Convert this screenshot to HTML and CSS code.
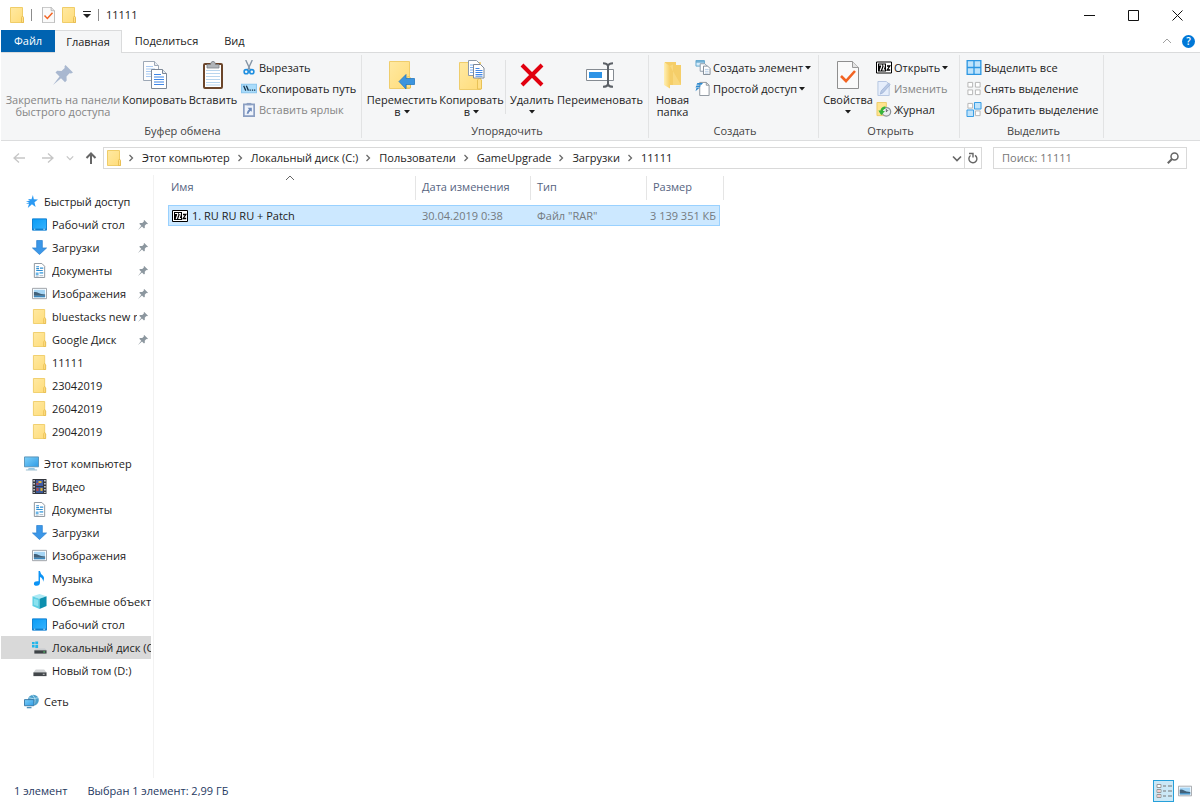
FILE: index.html
```html
<!DOCTYPE html>
<html lang="ru">
<head>
<meta charset="utf-8">
<title>11111</title>
<link rel="stylesheet" href="styles.css">
</head>
<body>
<svg class="sprite" aria-hidden="true">
  <defs>
    <linearGradient id="g-folder" x1="0" y1="0" x2="1" y2="1"><stop offset="0" stop-color="#ffe9a2"/><stop offset="1" stop-color="#ffdc79"/></linearGradient>
    <linearGradient id="g-screen" x1="0" y1="0" x2="1" y2="1"><stop offset="0" stop-color="#7fd0f8"/><stop offset="1" stop-color="#2d9be6"/></linearGradient>
    <linearGradient id="g-desk" x1="0" y1="0" x2="1" y2="1"><stop offset="0" stop-color="#0a9cf5"/><stop offset="1" stop-color="#36b4ff"/></linearGradient>
    <linearGradient id="g-open" x1="0" y1="0" x2="1" y2="0"><stop offset="0" stop-color="#fff0b5"/><stop offset="1" stop-color="#f7cf66"/></linearGradient>
  </defs>
  <symbol id="folder" viewBox="0 0 14 16"><path d="M.5.5h12v9.5l1 1v4.500H.5z" fill="url(#g-folder)" stroke="#f0cd68"/><path d="M11.500 15.500V10.500l1-1.500 1 1.500v5z" fill="#ffe08a" stroke="#e5b94a" stroke-width=".8"/></symbol>
  <symbol id="props" viewBox="0 0 22 28"><path d="M.5.5h15l6 6v21H.5z" fill="#fafafa" stroke="#8f8f8f"/><path d="M15.500.5v6h6" fill="#e4e4e4" stroke="#9a9a9a"/><path d="M4 15l5 5L18 10" fill="none" stroke="#f26322" stroke-width="2.600"/></symbol>
  <symbol id="pin" viewBox="0 0 20 20"><path d="M12.500 0L20 7.500l-2 1-1.500-.3-3 3.300.2 4-1.700 1.700-4-4L0 20l6.500-8.500-4-4L4.200 5.800l4.300.2 3.200-3L11.500 1.200z"/></symbol>
  <symbol id="copy" viewBox="0 0 24 28"><g opacity=".85"><path d="M.5.5h11l4 4v15H.5z" fill="#fff" stroke="#8e9bab"/><path d="M11.500.5v4h4" fill="#e5eaf0" stroke="#8e9bab"/><path d="M3 5.500h7M3 8h9M3 10.500h9M3 13h9M3 15.500h9" stroke="#9cc3f3"/></g><path d="M8.500 8.500h11l4 4v15h-15z" fill="#fff" stroke="#7d8897"/><path d="M19.500 8.500v4h4" fill="#e5eaf0" stroke="#7d8897"/><path d="M11 13.500h7M11 16h10M11 18.500h10M11 21h10M11 23.500h10" stroke="#3f86e6" stroke-width="1.200"/></symbol>
  <symbol id="paste" viewBox="0 0 20 28"><rect x="1" y="3" width="18" height="24" rx="1" fill="#fff" stroke="#6b452a" stroke-width="2"/><path d="M3 9.500h14M3 12.500h14M3 15.500h14M3 18.500h14M3 21.500h14M3 24h14" stroke="#b9d6ee"/><path d="M4 3.500h3.500L8 1.500q2-2.500 4 0l.5 2H16V7H4z" fill="#b0b4b8" stroke="#7c8085" stroke-width=".8"/></symbol>
  <symbol id="cut" viewBox="0 0 12 16"><path d="M2.500 0l5 11M9.500 0l-5 11" stroke="#8595a6" stroke-width="1.500"/><circle cx="3" cy="12.500" r="2.200" fill="none" stroke="#1f8fe0" stroke-width="1.700"/><circle cx="9" cy="12.500" r="2.200" fill="none" stroke="#1f8fe0" stroke-width="1.700"/></symbol>
  <symbol id="path" viewBox="0 0 15 9"><path d="M.5.5h14v8H.5z" fill="#a9dcfb" stroke="#8ac6ee"/><path d="M2.500 2l2 4.500M5 2l2 4.500" stroke="#16324a" stroke-width="1.200"/><path d="M8 6h1.200M10.200 6h1.200M12.200 6h1.200" stroke="#16324a"/></symbol>
  <symbol id="shortcut" viewBox="0 0 13 16"><path d="M1 2.500h11v12.500H1z" fill="#eef3fb" stroke="#8b9fc2" stroke-width="1.800"/><path d="M4 1h5v2.500H4z" fill="#8b9fc2"/><path d="M5 6h4.500v4.500L8.200 9.200Q6 10.500 6 12.500H4Q4 9.500 6.600 7.600z" fill="#6f8bbb"/></symbol>
  <symbol id="move" viewBox="0 0 26 28"><path d="M.5.500h20v27H.5z" fill="url(#g-folder)" stroke="#efcd6c"/><path d="M17.500 27V17l2-2 2 2v10z" fill="#ffe08a" stroke="#e8c257"/><path d="M10 20.500l7-7V17.500h8.500v6H17V28z" fill="#3c94de" stroke="#2478c0" stroke-width=".8"/></symbol>
  <symbol id="copyto" viewBox="0 0 26 30"><path d="M.5 2.500h21v27H.5z" fill="url(#g-folder)" stroke="#efcd6c"/><path d="M18.500 29V20l2-2 2 2v9z" fill="#ffe08a" stroke="#e8c257"/><path d="M9.500.500h8l3 3v12h-11z" fill="#fff" stroke="#8e9bab"/><path d="M11 5h6M11 7.500h4M11 10h4M11 12.500h4" stroke="#7cb0f0"/><path d="M14.500 4.500h7l3.500 3.500v10h-10.500z" fill="#fff" stroke="#7d8897"/><path d="M16.500 8.500h4M16.500 10.500h7M16.500 12.500h7M16.500 14.500h7M16.500 16.200h7" stroke="#3f86e6"/></symbol>
  <symbol id="delete" viewBox="0 0 24 24"><path d="M2 2l20 20M22 2L2 22" stroke="#e1000f" stroke-width="4" fill="none"/></symbol>
  <symbol id="rename" viewBox="0 0 28 26"><path d="M.500 7.500h27v11H.500z" fill="#fff" stroke="#858b92"/><path d="M3 10h13v6H3z" fill="#2d93e6"/><path d="M17 1.200q4 0 5 2.300 1-2.300 5-2.300M22 3v20M17 24.800q4 0 5-2.300 1 2.300 5 2.300" fill="none" stroke="#5c6167" stroke-width="2"/></symbol>
  <symbol id="newfolder" viewBox="0 0 18 28"><path d="M1 1h11v3h5v20H1z" fill="#f5ce69"/><path d="M0 1l6 4v22.500L0 24z" fill="url(#g-open)"/><path d="M6 5l3-1.500V24h8" fill="#f9d87e"/></symbol>
  <symbol id="newitem" viewBox="0 0 16 16"><path d="M.5.5h9v6h-9z" fill="#d6edfb" stroke="#5fa5cd"/><path d="M.5 2h9" stroke="#5fa5cd" stroke-width="1.500"/><path d="M5 4h5l2 2v6H5z" fill="#fff" stroke="#8a99a8"/><path d="M8.500 6.500H13l2.500 2.500v6.500h-7z" fill="#fff" stroke="#7c8793"/><path d="M10 10h4M10 12h4M10 14h4" stroke="#9ebcdc" stroke-width=".8"/></symbol>
  <symbol id="easy" viewBox="0 0 16 16"><path d="M4.500 1.500h7l3 3v11h-10z" fill="#fff" stroke="#8a929b"/><path d="M11.500 1.500v3h3" fill="none" stroke="#8a929b"/><path d="M2 2h6L6.500 4H1zM1 4.800h5L4 7H0zM1 7.500h3L0 11z" fill="#2f8bd0"/></symbol>
  <symbol id="sevenzip" viewBox="0 0 16 12"><path d="M.5.500h15v11H.5z" fill="#fff" stroke="#000"/><path d="M2 2h8v8H2z" fill="#000"/><path d="M3 3.500h2.700v1.500L4.200 9M7 3.500h2M8.200 3.500v1.500L7 8.500h2" fill="none" stroke="#fff" stroke-width="1.200"/><path d="M11 4.500h2.800L11.200 8.500h3" fill="none" stroke="#000" stroke-width="1.300"/></symbol>
  <symbol id="edit" viewBox="0 0 14 16"><path d="M.5.500h9l3 3v12H.5z" fill="#e6eefb" stroke="#b3c4e0"/><path d="M3 14l1-3.500L12 2l1.500 2L6 12.500z" fill="#b9c9e4" stroke="#9db2d6" stroke-width=".8"/></symbol>
  <symbol id="history" viewBox="0 0 16 16"><path d="M.5.500h10v14H.5z" fill="#ffe48f" stroke="#eccb68"/><circle cx="10.500" cy="10.500" r="4.600" fill="#e9ecee" stroke="#8c9296" stroke-width="1.300"/><path d="M10.500 7.500v3l2-2" fill="none" stroke="#5d6469" stroke-width="1"/><path d="M2 9h2.200Q5 5 9.500 4.500v2.300Q7 7.500 6.700 9.500H9L5 14z" fill="#35b53a"/></symbol>
  <symbol id="selall" viewBox="0 0 16 16"><path d="M.7.700h14.600v14.600H.7zM8 .7v14.600M.7 8h14.600" fill="#bfe3fb" stroke="#2c96e2" stroke-width="1.400"/></symbol>
  <symbol id="selnone" viewBox="0 0 16 16"><path d="M1.500 1.500h5v5h-5zM9.500 1.500h5v5h-5zM1.500 9.500h5v5h-5zM9.500 9.500h5v5h-5z" fill="#fff" stroke="#b3b3b3"/></symbol>
  <symbol id="selinv" viewBox="0 0 16 16"><path d="M1.500 1.500h5v5h-5zM9.500 9.500h5v5h-5z" fill="#fff" stroke="#b3b3b3"/><path d="M8.500.500h7v7h-7zM.5 8.500h7v7h-7z" fill="#bfe3fb" stroke="#2c96e2"/></symbol>
  <symbol id="star" viewBox="0 0 14 14"><path d="M8.500 0l1 4.500 4.500.3-3.800 3 1.200 5.200L7.500 10 3 14l1.300-4.500H1L4.600 7.800 1 7l4.300-1L3 4.400l4 .1z" fill="#2b9af3"/></symbol>
  <symbol id="desktop" viewBox="0 0 16 13"><path d="M.5.500h15v12H.5z" fill="url(#g-desk)" stroke="#0b7ccf"/><path d="M1 11.500h14" stroke="#0670bd"/><path d="M2 11.500h1.500M12 11.500h2" stroke="#bfe3ff"/></symbol>
  <symbol id="down" viewBox="0 0 16 16"><path d="M5 .5h6v8h4.500L8 15.500.5 8.500H5z" fill="#3b97e8" stroke="#2c82d0" stroke-width=".8"/></symbol>
  <symbol id="docs" viewBox="0 0 12 16"><path d="M.5.500h8l3 3v12H.5z" fill="#fff" stroke="#8a929b"/><path d="M2.500 4h3M2.500 6h3M6.500 5.500h3.500M2.500 8h7" stroke="#2f8fd3" stroke-width="1.200"/><path d="M2 10h3v3H2zM6 9.500h4v2H6z" fill="#69b4e6"/><path d="M6 13.500h4M2 14h3" stroke="#8ba4b8" stroke-width=".8"/></symbol>
  <symbol id="image" viewBox="0 0 16 12"><path d="M.5.500h15v11H.5z" fill="#fff" stroke="#9a9fa5"/><path d="M2 2h12v8H2z" fill="#a5d5f5"/><path d="M2 4.500q3-.5 5 1t7 1.500v1.500H2z" fill="#41617a"/><path d="M2 8.500h12V10H2z" fill="#3b87bd"/></symbol>
  <symbol id="pc" viewBox="0 0 16 15"><path d="M.5.500h15v10.500H.5z" fill="url(#g-screen)" stroke="#5892b7"/><path d="M5 12.500h6l1 1.500H4z" fill="#6eb3dd"/><path d="M2 14.400h12" stroke="#91b7cc"/></symbol>
  <symbol id="video" viewBox="0 0 14 15"><path d="M0 0h14v15H0z" fill="#34373e"/><path d="M1.600 1v13M12.400 1v13" stroke="#d7dbe0" stroke-width="1.500" stroke-dasharray="1.500 1.500"/><path d="M3.500 1h7v6h-7z" fill="#405da8"/><path d="M3.500 8h7v6h-7z" fill="#3d5a99"/><path d="M6 2h3v2H6zM8 9h2v3H8z" fill="#e0b135"/><path d="M4 4h2v2H4zM4 9h2v3H4z" fill="#ba4b42"/></symbol>
  <symbol id="music" viewBox="0 0 12 16"><path d="M5 0h1.500Q7 3 9.500 4.800 12 7 9.800 11.500 10 8 6.500 6.500V12.500Q6.300 15.500 3 15.800 0 15.800 0 13.600 .3 11 3.500 11H5z" fill="#0b93f5"/></symbol>
  <symbol id="cube" viewBox="0 0 16 16"><path d="M8 0l7.500 2.500L8 5 .5 2.500z" fill="#aeeaf5"/><path d="M.5 2.500L8 5v11L.5 12.800z" fill="#5fd0e4"/><path d="M15.500 2.500L8 5v11l7.500-3.200z" fill="#0d8fae"/><path d="M2 5l4.500 1.500v6.500L2 11.500z" fill="#8be2ef"/></symbol>
  <symbol id="drive-c" viewBox="0 0 16 14"><path d="M0 1h2.800v2.600H0zM3.500.5h3v3.100h-3zM0 4.300h2.800v2.600H0zM3.500 4.300h3v3.100h-3z" fill="#21b5ea"/><path d="M4 8h10l1.500 2H2.500z" fill="#c9cccf"/><path d="M2.500 10h13v3.500h-13z" fill="#3e4347"/><path d="M12 11.800h2" stroke="#59e06f"/></symbol>
  <symbol id="drive" viewBox="0 0 16 14"><path d="M4 6h9l2.500 3h-14z" fill="#d2d4d6"/><path d="M1.500 9h14v4h-14z" fill="#43474b"/><path d="M11.500 11h2" stroke="#dadada"/></symbol>
  <symbol id="network" viewBox="0 0 16 15"><circle cx="10" cy="6" r="5.800" fill="#4c9fca"/><path d="M5 3.500q5 2 10 0M9 .5q5 5 1 11" fill="none" stroke="#b1def2"/><path d="M.5 5.500h10v6.500H.5z" fill="url(#g-screen)" stroke="#3779a6"/><path d="M3 14h5" stroke="#4e90b8" stroke-width="1.500"/></symbol>
  <symbol id="chev-r" viewBox="0 0 6 8"><path d="M1.500 1l3 3-3 3" fill="none" stroke="#6a6a6a" stroke-width="1.300"/></symbol>
  <symbol id="chev-d" viewBox="0 0 10 7"><path d="M1 1.500l4 4 4-4" fill="none" stroke="currentColor" stroke-width="1.600"/></symbol>
  <symbol id="chev-u" viewBox="0 0 10 6"><path d="M1 5l4-4 4 4" fill="none" stroke="currentColor"/></symbol>
  <symbol id="arrow" viewBox="0 0 12 10"><path d="M6 .5L1 5l5 4.500M1 5h11" fill="none" stroke="currentColor" stroke-width="1.300"/></symbol>
  <symbol id="caret" viewBox="0 0 6 4"><path d="M0 0h6L3 3.500z" fill="currentColor"/></symbol>
</svg>

<div class="window">
  <header class="titlebar">
    <svg class="ico folder"><use href="#folder"/></svg>
    <span class="tick"></span>
    <button class="quick props" aria-label="Свойства"><svg><use href="#props"/></svg></button>
    <button class="quick" aria-label="Новая папка"><svg class="folder"><use href="#folder"/></svg></button>
    <button class="quick more" aria-label="Настройка панели"><svg viewBox="0 0 8 8"><path d="M0 .5h8" stroke="#222"/><path d="M0 3h8L4 7z" fill="#222"/></svg></button>
    <span class="tick"></span>
    <h1>11111</h1>
    <div class="controls">
      <button aria-label="Свернуть"><svg viewBox="0 0 11 11"><path d="M0 5.500h11"/></svg></button>
      <button aria-label="Развернуть"><svg viewBox="0 0 11 11"><path d="M.5.500h10v10H.5z"/></svg></button>
      <button aria-label="Закрыть"><svg viewBox="0 0 11 11"><path d="M.5.500l10 10M10.500.500l-10 10"/></svg></button>
    </div>
  </header>

  <nav class="tabs">
    <button class="tab file">Файл</button>
    <button class="tab active">Главная</button>
    <button class="tab">Поделиться</button>
    <button class="tab">Вид</button>
    <div class="tabs-end">
      <button class="collapse" aria-label="Свернуть ленту"><svg><use href="#chev-u"/></svg></button>
      <button class="help" aria-label="Справка">?</button>
    </div>
  </nav>

  <section class="ribbon">
    <div class="group g-clip">
      <div class="tools">
        <button class="big w-pin" disabled><span class="pic"><svg class="pin-big"><use href="#pin"/></svg></span>Закрепить на панели быстрого доступа</button>
        <button class="big w-copy"><span class="pic"><svg class="s24"><use href="#copy"/></svg></span>Копировать</button>
        <button class="big w-mid"><span class="pic"><svg class="s20"><use href="#paste"/></svg></span>Вставить</button>
        <div class="stack">
          <button class="small"><svg><use href="#cut"/></svg>Вырезать</button>
          <button class="small"><svg><use href="#path"/></svg>Скопировать путь</button>
          <button class="small" disabled><svg><use href="#shortcut"/></svg>Вставить ярлык</button>
        </div>
      </div>
      <div class="caption">Буфер обмена</div>
    </div>
    <div class="group g-org">
      <div class="tools">
        <button class="big w-move"><span class="pic"><svg class="s26"><use href="#move"/></svg></span>Переместить<span>в<svg class="caret"><use href="#caret"/></svg></span></button>
        <button class="big w-copyto"><span class="pic"><svg class="s26"><use href="#copyto"/></svg></span>Копировать<span>в<svg class="caret"><use href="#caret"/></svg></span></button>
        <span class="split"></span>
        <button class="big w-mid"><span class="pic"><svg class="s24"><use href="#delete"/></svg></span>Удалить<span><svg class="caret alone"><use href="#caret"/></svg></span></button>
        <button class="big w-ren"><span class="pic"><svg class="s28"><use href="#rename"/></svg></span>Переименовать</button>
      </div>
      <div class="caption">Упорядочить</div>
    </div>
    <div class="group g-new">
      <div class="tools">
        <button class="big w-new"><span class="pic"><svg class="s20"><use href="#newfolder"/></svg></span>Новая папка</button>
        <div class="stack">
          <button class="small"><svg><use href="#newitem"/></svg>Создать элемент<svg class="caret"><use href="#caret"/></svg></button>
          <button class="small"><svg><use href="#easy"/></svg>Простой доступ<svg class="caret"><use href="#caret"/></svg></button>
        </div>
      </div>
      <div class="caption">Создать</div>
    </div>
    <div class="group g-open">
      <div class="tools">
        <button class="big w-mid"><span class="pic"><svg class="s24"><use href="#props"/></svg></span>Свойства<span><svg class="caret alone"><use href="#caret"/></svg></span></button>
        <div class="stack">
          <button class="small"><svg><use href="#sevenzip"/></svg>Открыть<svg class="caret"><use href="#caret"/></svg></button>
          <button class="small" disabled><svg><use href="#edit"/></svg>Изменить</button>
          <button class="small"><svg><use href="#history"/></svg>Журнал</button>
        </div>
      </div>
      <div class="caption">Открыть</div>
    </div>
    <div class="group g-sel">
      <div class="tools">
        <div class="stack">
          <button class="small"><svg><use href="#selall"/></svg>Выделить все</button>
          <button class="small"><svg><use href="#selnone"/></svg>Снять выделение</button>
          <button class="small"><svg><use href="#selinv"/></svg>Обратить выделение</button>
        </div>
      </div>
      <div class="caption">Выделить</div>
    </div>
  </section>

  <div class="location">
    <div class="history">
      <button class="off" aria-label="Назад"><svg><use href="#arrow"/></svg></button>
      <button class="off" aria-label="Вперёд"><svg class="flip"><use href="#arrow"/></svg></button>
      <button class="off recent" aria-label="Последние"><svg><use href="#chev-d"/></svg></button>
      <button class="up" aria-label="Вверх"><svg viewBox="0 0 12 12"><path d="M1.500 6L6 1.500 10.500 6M6 2v10" fill="none" stroke="#666" stroke-width="2"/></svg></button>
    </div>
    <div class="address">
      <svg class="folder"><use href="#folder"/></svg>
      <svg class="sep"><use href="#chev-r"/></svg><a href="#">Этот компьютер</a>
      <svg class="sep"><use href="#chev-r"/></svg><a href="#">Локальный диск (C:)</a>
      <svg class="sep"><use href="#chev-r"/></svg><a href="#">Пользователи</a>
      <svg class="sep"><use href="#chev-r"/></svg><a href="#">GameUpgrade</a>
      <svg class="sep"><use href="#chev-r"/></svg><a href="#">Загрузки</a>
      <svg class="sep"><use href="#chev-r"/></svg><a href="#">11111</a>
      <button class="drop" aria-label="Предыдущие расположения"><svg><use href="#chev-d"/></svg></button>
      <button class="refresh" aria-label="Обновить"><svg viewBox="0 0 10 12"><path d="M7 3.300A4 4 0 1 1 2.500 3.500M1 1.500h4v4" fill="none" stroke="#666" stroke-width="1.400"/></svg></button>
    </div>
    <label class="search">
      <input type="text" placeholder="Поиск: 11111" aria-label="Поиск">
      <svg viewBox="0 0 12 12"><circle cx="7.500" cy="4.500" r="3.500" fill="none" stroke="#666" stroke-width="1.500"/><path d="M5 7L.8 11.200" stroke="#666" stroke-width="2"/></svg>
    </label>
  </div>

  <main class="body">
    <nav class="tree">
      <ul>
        <li><a href="#" class="root quickroot"><svg><use href="#star"/></svg><span>Быстрый доступ</span></a></li>
        <li><a href="#"><svg><use href="#desktop"/></svg><span>Рабочий стол</span><svg class="pinned"><use href="#pin"/></svg></a></li>
        <li><a href="#"><svg><use href="#down"/></svg><span>Загрузки</span><svg class="pinned"><use href="#pin"/></svg></a></li>
        <li><a href="#"><svg><use href="#docs"/></svg><span>Документы</span><svg class="pinned"><use href="#pin"/></svg></a></li>
        <li><a href="#"><svg><use href="#image"/></svg><span>Изображения</span><svg class="pinned"><use href="#pin"/></svg></a></li>
        <li><a href="#"><svg><use href="#folder"/></svg><span>bluestacks new r</span><svg class="pinned"><use href="#pin"/></svg></a></li>
        <li><a href="#"><svg><use href="#folder"/></svg><span>Google Диск</span><svg class="pinned"><use href="#pin"/></svg></a></li>
        <li><a href="#"><svg><use href="#folder"/></svg><span>11111</span></a></li>
        <li><a href="#"><svg><use href="#folder"/></svg><span>23042019</span></a></li>
        <li><a href="#"><svg><use href="#folder"/></svg><span>26042019</span></a></li>
        <li><a href="#"><svg><use href="#folder"/></svg><span>29042019</span></a></li>
      </ul>
      <ul>
        <li><a href="#" class="root"><svg><use href="#pc"/></svg><span>Этот компьютер</span></a></li>
        <li><a href="#"><svg><use href="#video"/></svg><span>Видео</span></a></li>
        <li><a href="#"><svg><use href="#docs"/></svg><span>Документы</span></a></li>
        <li><a href="#"><svg><use href="#down"/></svg><span>Загрузки</span></a></li>
        <li><a href="#"><svg><use href="#image"/></svg><span>Изображения</span></a></li>
        <li><a href="#"><svg><use href="#music"/></svg><span>Музыка</span></a></li>
        <li><a href="#"><svg><use href="#cube"/></svg><span>Объемные объекты</span></a></li>
        <li><a href="#"><svg><use href="#desktop"/></svg><span>Рабочий стол</span></a></li>
        <li><a href="#" class="current"><svg><use href="#drive-c"/></svg><span>Локальный диск (C:)</span></a></li>
        <li><a href="#"><svg><use href="#drive"/></svg><span>Новый том (D:)</span></a></li>
      </ul>
      <ul>
        <li><a href="#" class="root"><svg><use href="#network"/></svg><span>Сеть</span></a></li>
      </ul>
    </nav>

    <div class="files">
      <table>
        <colgroup><col class="c-name"><col class="c-date"><col class="c-type"><col class="c-size"></colgroup>
        <thead>
          <tr>
            <th><div>Имя<svg class="sort"><use href="#chev-u"/></svg></div></th>
            <th><div>Дата изменения</div></th>
            <th><div>Тип</div></th>
            <th class="last"><div>Размер</div></th>
          </tr>
        </thead>
        <tbody>
          <tr>
            <td><div class="name"><svg><use href="#sevenzip"/></svg>1. RU RU RU + Patch</div></td>
            <td>30.04.2019 0:38</td>
            <td>Файл "RAR"</td>
            <td class="num">3 139 351 КБ</td>
          </tr>
        </tbody>
      </table>
    </div>
  </main>

  <footer class="status">
    <span>1 элемент</span>
    <span>Выбран 1 элемент: 2,99 ГБ</span>
    <div class="views">
      <button class="on" aria-label="Таблица"><svg viewBox="0 0 16 14"><path d="M1 .5h4v3H1zM1 5.500h4v3H1zM1 10.500h4v3H1z" fill="#fff" stroke="#999"/><path d="M7 2h3M7 7h3M7 12h3M12 2h4M12 7h4M12 12h4" stroke="#777"/><path d="M2.500 7h1M2.500 12h1" stroke="#d33"/></svg></button>
      <button aria-label="Крупные значки"><svg><use href="#image"/></svg></button>
    </div>
  </footer>
</div>
</body>
</html>
```

FILE: styles.css
```css
* { box-sizing: border-box; }
body {
  margin: 0;
  background: #fff;
  color: #1c1c1c;
  font: 11px/12px "Open Sans", "Noto Sans", sans-serif;
}
button {
  margin: 0;
  padding: 0;
  border: 0;
  background: none;
  color: inherit;
  font: inherit;
}
a { color: inherit; text-decoration: none; }
svg { display: block; flex: none; }
.sprite { position: absolute; width: 0; height: 0; }
.folder { width: 14px; height: 16px; }

.window {
  display: flex;
  flex-direction: column;
  min-height: 100vh;
  padding-left: 1px;
}

/* Title bar */
.titlebar { display: flex; align-items: center; height: 30px; padding-left: 9px; }
.tick { width: 1px; height: 12px; margin-left: 7px; background: #8c8c8c; }
.quick { margin-left: 7px; }
.quick.props { margin-left: 10px; }
.quick.props svg { width: 13px; height: 16px; }
.quick.more svg { width: 8px; height: 8px; }
.titlebar h1 { margin: 0 0 0 7px; font-size: 11px; font-weight: 400; }
.controls { display: flex; margin-left: auto; padding-right: 1px; }
.controls button { display: grid; place-items: center; width: 44px; height: 30px; }
.controls svg { width: 11px; height: 11px; fill: none; stroke: #111; }

/* Ribbon tabs */
.tabs { display: flex; height: 23px; border-bottom: 1px solid #dadbdc; }
.tab { height: 22px; padding: 0 13px; }
.tab.file { background: #0063b1; color: #fff; }
.tab.active {
  height: 23px;
  padding: 0 11px;
  border: 1px solid #dadbdc;
  border-width: 1px 1px 0 0;
  background: #f5f6f7;
}
.tabs-end { display: flex; align-items: center; gap: 10px; margin-left: auto; padding-right: 5px; }
.collapse { color: #a0a0a0; }
.collapse svg { width: 10px; height: 6px; }
.help { width: 13px; height: 13px; border-radius: 50%; background: #0078d7; color: #fff; font-size: 10px; line-height: 13px; font-weight: 600; }

/* Ribbon */
.ribbon { display: flex; height: 88px; padding-bottom: 2px; border-bottom: 1px solid #dcddde; background: #f5f6f7; }
.group { display: flex; flex-direction: column; flex: none; margin-top: 2px; border-right: 1px solid #e2e3e4; }
.g-clip { width: 361px; padding-left: 3px; }
.g-org { width: 287px; padding-left: 4px; }
.g-new { width: 170px; padding-left: 3px; }
.g-open { width: 141px; padding-left: 3px; }
.g-sel { width: 144px; padding-left: 4px; }
.tools { display: flex; flex: 1; }
.caption { height: 13px; color: #444; text-align: center; }
.big { display: flex; flex-direction: column; align-items: center; line-height: 12px; }
.big .pic { display: grid; place-items: center; height: 39px; }
.big > span { display: flex; align-items: center; min-height: 12px; }
.big .caret { margin-left: 3px; }
.big .caret.alone { margin-left: 0; }
.big:disabled, .small:disabled { color: #858585; }
.w-pin { width: 118px; }
.w-copy { width: 65px; }
.w-mid { width: 52px; }
.w-move { width: 72px; }
.w-copyto { width: 67px; }
.w-ren { width: 84px; }
.w-new { width: 41px; }
.s20 { width: 20px; height: 28px; }
.s24 { width: 24px; height: 28px; }
.s26 { width: 26px; height: 30px; }
.s28 { width: 28px; height: 28px; }
.pin-big { width: 20px; height: 20px; fill: #a9b8d0; }
.split { width: 1px; height: 54px; margin-top: 5px; background: #e0e1e2; }
.stack { display: flex; flex-direction: column; padding: 2px 0 0 2px; }
.small { display: flex; align-items: center; gap: 2px; height: 21px; white-space: nowrap; }
.small svg { width: 16px; height: 15px; }
.caret, .small .caret { width: 6px; height: 4px; }

/* Address row */
.location { display: flex; align-items: center; height: 34px; padding-right: 13px; }
.history { display: flex; align-items: center; width: 102px; padding-left: 12px; color: #c6c6c6; }
.history svg { width: 12px; height: 10px; }
.history button + button { margin-left: 17px; }
.history .recent { margin-left: 12px; }
.history .recent svg { width: 8px; height: 6px; }
.history .recent + .up { margin-left: 11px; }
.history .up svg { width: 12px; height: 12px; }
.flip { transform: scaleX(-1); }
.address { display: flex; flex: 1; align-items: center; height: 22px; padding-left: 3px; border: 1px solid #d9d9d9; white-space: nowrap; }
.address .sep { width: 6px; height: 8px; margin: 0 8px 0 7px; }
.drop { margin-left: auto; padding-right: 2px; color: #666; }
.drop svg { width: 10px; height: 7px; }
.refresh { display: grid; place-items: center; width: 17px; height: 20px; border-left: 1px solid #d9d9d9; }
.refresh svg { width: 10px; height: 12px; }
.search { display: flex; align-items: center; width: 194px; height: 22px; margin-left: 11px; padding: 0 7px 0 8px; border: 1px solid #d9d9d9; }
.search input { flex: 1; min-width: 0; padding: 0; border: 0; outline: 0; background: none; color: #333; font: inherit; }
.search input::placeholder { color: #767676; opacity: 1; }
.search svg { width: 12px; height: 12px; }

/* Content */
.body { display: flex; flex: 1; }
.tree { flex: none; width: 153px; padding-top: 15px; border-right: 1px solid #f2f2f2; }
.tree ul { margin: 0 0 8px; padding: 0; list-style: none; }
.tree ul:first-child { margin-bottom: 9px; }
.tree a { display: flex; align-items: center; height: 23px; margin-right: 2px; padding-left: 31px; }
.tree a.root { padding-left: 23px; }
.tree a > svg { width: 15px; height: 15px; }
.tree a.quickroot > svg { height: 13px; }
.tree span { flex: 1; min-width: 0; margin-left: 5px; overflow: hidden; line-height: 16px; white-space: nowrap; }
.tree a > svg.pinned { width: 10px; height: 10px; margin: 0 3px 0 1px; fill: #8c979f; }
.tree .current { background: #d9d9d9; }

.files { flex: 1; padding: 1px 0 0 14px; }
.files table { border-spacing: 0; table-layout: fixed; width: 552px; }
.c-name { width: 248px; }
.c-date { width: 115px; }
.c-type { width: 116px; }
.files th { padding: 0 0 5px; color: #56647f; font-weight: 400; text-align: left; }
.files th div { position: relative; height: 24px; padding-left: 6px; border-right: 1px solid #e5e5e5; line-height: 22px; }
.files th:first-child div { padding-left: 3px; }
.files th.last div { margin-right: -4px; }
.sort { position: absolute; top: -1px; left: 117px; width: 10px; height: 6px; color: #666; }
.files td { height: 21px; padding: 0 6px; border: solid #99d1ff; border-width: 1px 0; background: #cce8ff; color: #747a80; line-height: 11px; white-space: nowrap; }
.files td:first-child { padding-left: 3px; border-left-width: 1px; color: #1c1c1c; }
.files td:last-child { padding: 0 3px; border-right-width: 1px; }
.name { display: flex; align-items: center; gap: 4px; }
.name svg { width: 16px; height: 12px; }
.num { text-align: right; }

/* Status bar */
.status { display: flex; align-items: center; height: 25px; padding: 0 8px 0 13px; color: #26395f; }
.status span + span { margin-left: 20px; }
.views { display: flex; align-items: center; gap: 4px; margin-left: auto; }
.views button { display: grid; place-items: center; height: 22px; }
.views svg { width: 14px; height: 12px; }
.views .on { width: 21px; border: 1px solid #26a0da; background: #cbe8f6; }
.views .on svg { width: 16px; height: 14px; }
```
